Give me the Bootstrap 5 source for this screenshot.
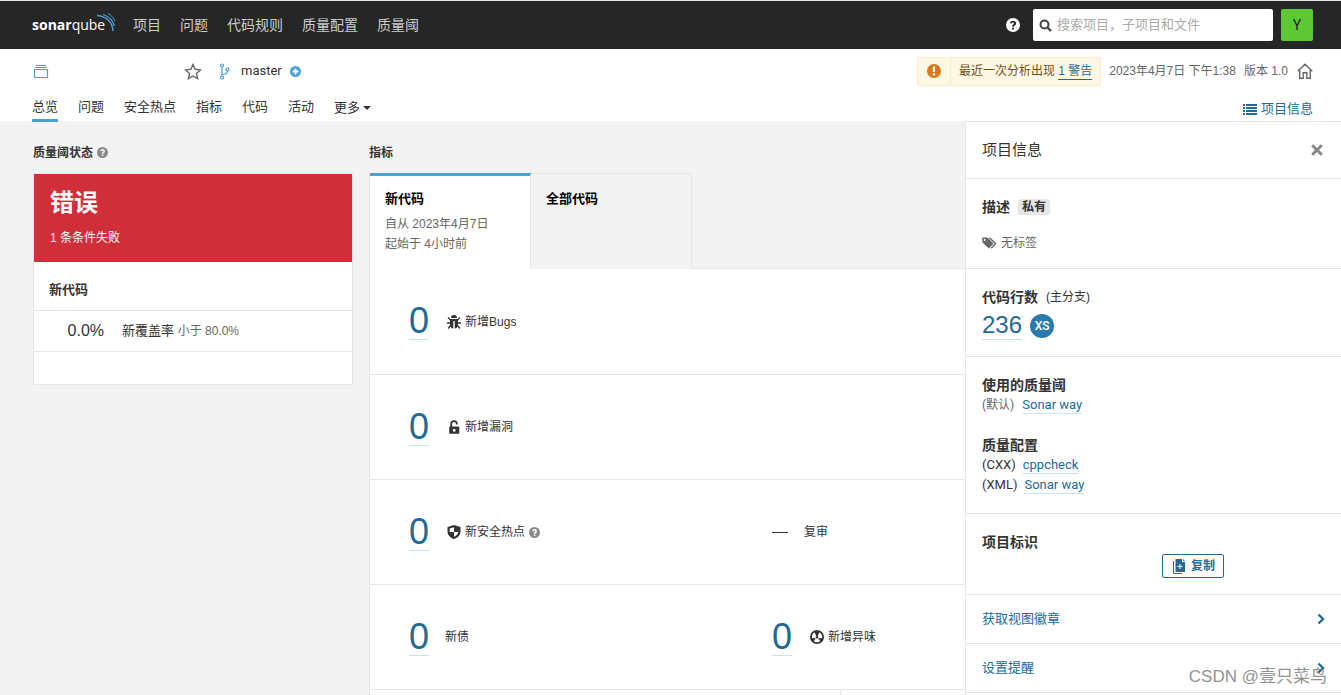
<!DOCTYPE html>
<html lang="zh-CN">
<head>
<meta charset="utf-8">
<meta name="viewport" content="width=device-width, initial-scale=1">
<title>SonarQube</title>
<link href="https://cdn.jsdelivr.net/npm/bootstrap@5.3.0/dist/css/bootstrap.min.css" rel="stylesheet">
<style>
body{font-family:Roboto,"Noto Sans CJK SC",sans-serif;font-size:12px;line-height:20px;color:#333;background:#f3f3f3;border-top:1px solid #dfe5e1}
a{color:#236a97;text-decoration:none}
svg{flex:none;fill:currentColor}
.arial{font-family:"Liberation Sans","Noto Sans CJK SC",sans-serif}
.fs13{font-size:13px}
.muted{color:#666}
.hint{color:#888}
.topbar{background:#262626;height:48px;padding:0 28px 0 32px}
.topbar nav{gap:19px;margin-left:17px}
.topbar nav a{color:#ccc;font-size:14px}
.search-box{width:240px;height:32px;background:#fff;border-radius:2px;padding:0 6px;color:#444;margin:0 8px 0 13px}
.search-box input{font-size:13px;padding:0 0 0 5px;line-height:20px}
.search-box input::placeholder{color:#aaa;opacity:1}
.avatar{width:32px;height:32px;background:#5cc934;color:#222;font-size:14px;border-radius:2px}
.context{background:#fff;height:72px;padding:8px 28px 0 32px}
.context .line1{height:28px}
.stroke{fill:none}
.alert-strip{background:#fcf8e3;border:1px solid #faebcc;border-radius:2px;color:#6f4f17;height:29px}
.alert-strip .sym{width:33px;border-right:1px solid #faebcc;color:#db781a}
.u{border-bottom:1px solid #cae3f2}
.alert-strip a{border-bottom:1px solid #236a97;line-height:16px}
.tabs{gap:20px}
.tabs a{color:#333;font-size:13px;height:25px;border-bottom:3px solid transparent;margin-top:12px}
.tabs a.on{border-color:#4b9fd5}
.tabs .dropdown-toggle::after{border-width:4px 4px 0}
.line{border:0 solid #e6e6e6}
.main-col{padding:21px 0 0 33px;gap:16px}
.gate{width:320px}
.sect{font-size:12px;font-weight:700;height:31px;line-height:22px;margin:0}
.gate-card{background:#fff;border-width:1px;height:212px}
.fail{background:#d02f3a;color:#fff;padding:12px 16px 13px;height:88px}
.fail h2{font-size:24px;line-height:34px;margin:0 0 8px;font-weight:700}
.gate-head{height:49px;padding:20px 15px 0;border-bottom-width:1px;margin:0}
.cond{height:41px;border-bottom-width:1px;gap:18px}
.cond b{width:70px;font-size:16px;font-weight:400}
.mtabs button{width:161px;height:96px;padding:15px 15px 0;border:0 solid #e6e6e6;background:none;text-align:left;color:#666;border-top-width:1px;border-right-width:1px}
.mtabs button strong{font-size:13px;color:#000;margin-bottom:5px}
.mtabs button.on{background:#fff;border-top:3px solid #4b9fd5;padding-top:13px}
.mtabs .fill{border-bottom-width:1px}
.measures{border-left-width:1px}
.m-row{background:#fff;height:105px;border-bottom-width:1px;padding-left:39px}
.mtabs + .m-row{height:106px}
.m-row .first{width:363px}
.big{font-size:36px;line-height:36px;height:37px}
.ico{margin-left:18px;margin-right:4px}
.info{width:376px;background:#fff;border-left-width:1px;border-top-width:1px}
.info section,.info header,.info .go{border-bottom-width:1px;padding:0 16px}
.info section{padding-top:18px}
.info .go{height:49px}
.info h3{font-size:14px;line-height:20px;font-weight:700;margin:0}
.tagbox{background:#e6e6e6;border-radius:3px;line-height:16px;padding:0 4px;font-weight:700}
.num{font-size:24px;line-height:28px}
.xs{width:24px;height:24px;background:#297bae;color:#fff;font-size:12px;font-weight:500}
.copy{height:24px;border:1px solid #236a97;border-radius:2px;color:#236a97;background:#fff;font-weight:700;padding:0 8px 0 10px;gap:6px;margin-left:180px;margin-top:2px}
.u13{line-height:16px}
.wm{right:14px;bottom:6px;font-size:17px;line-height:24px;color:#777;opacity:.8;pointer-events:none}
</style>
</head>
<body class="vh-100 overflow-hidden d-flex flex-column position-relative">
<svg width="0" height="0" class="position-absolute" aria-hidden="true">
<symbol id="help" viewBox="0 0 16 16"><path fill-rule="evenodd" d="M8 0a8 8 0 1 1 0 16A8 8 0 0 1 8 0zM7 11v2h2.300v-2zM4.600 5.600l1.600 1C6.700 5.700 7.200 5.200 8 5.200c.7 0 1.200.4 1.200.9 0 .6-.4.9-1 1.300C7.400 7.900 7 8.500 7 9.300v.7h2.200v-.4c0-.5.5-.8 1.100-1.200.8-.5 1.300-1.200 1.300-2.300C11.600 4.300 10 3 8.200 3 6.400 3 5.300 4 4.600 5.600z"/></symbol>
<symbol id="chev" viewBox="0 0 8 12"><path d="M1.500 1.500 6 6l-4.500 4.500" fill="none" stroke="currentColor" stroke-width="2.400"/></symbol>
</svg>

<header class="topbar d-flex align-items-center flex-shrink-0">
  <a href="#" aria-label="sonarqube"><svg width="84" height="30" viewBox="0 0 84 30">
    <text x="0" y="20" font-family="Open Sans" font-size="14" fill="#fff"><tspan font-weight="700">sonar</tspan><tspan>qube</tspan></text>
    <g fill="none" stroke="#4b9fd5"><path d="M65 5.500c9 .5 15.500 6.500 16 15.500" stroke-width="1.500"/><path d="M71 4.500c6 2 10 6 11.500 11.500" stroke-width="1.200"/><path d="M76 3.500c3.500 2 5.500 4.500 7 7.500"/></g>
  </svg></a>
  <nav class="d-flex"><a href="#">项目</a><a href="#">问题</a><a href="#">代码规则</a><a href="#">质量配置</a><a href="#">质量阈</a></nav>
  <div class="ms-auto d-flex align-items-center">
    <a href="#" class="text-white d-flex" aria-label="帮助"><svg width="14" height="14"><use href="#help"/></svg></a>
    <label class="search-box d-flex align-items-center">
      <svg width="13" height="13" viewBox="0 0 13 13"><circle cx="5.500" cy="5.500" r="4" fill="none" stroke="currentColor" stroke-width="2"/><path d="m8.500 8.500 3.500 3.500" stroke="currentColor" stroke-width="2.400"/></svg>
      <input type="text" class="form-control border-0 shadow-none bg-transparent" placeholder="搜索项目，子项目和文件" aria-label="搜索">
    </label>
    <button class="avatar border-0 p-0">Y</button>
  </div>
</header>

<div class="context flex-shrink-0">
  <div class="line1 d-flex align-items-center">
    <svg class="stroke" width="18" height="15" viewBox="0 0 18 15" stroke="#4b9fd5"><path d="M2.500 5.500h13v8h-13zM3 3.500h12M4 1.500h10" stroke-width="1.200"/></svg>
    <svg class="stroke" width="18" height="17" viewBox="0 0 18 17" style="margin-left:134px" stroke="#666" stroke-width="1.400"><path d="m9 1.500 2.200 4.800 5.200.6-3.900 3.500 1.100 5.200L9 13l-4.600 2.600 1.100-5.200L1.600 6.900l5.200-.6z"/></svg>
    <svg class="stroke" width="12" height="17" viewBox="0 0 12 17" style="margin-left:17px" stroke="#4b9fd5" stroke-width="1.200"><circle cx="3" cy="2.500" r="1.500"/><circle cx="3" cy="14.500" r="1.500"/><circle cx="8.500" cy="6.500" r="1.500"/><path d="M3 4v9M3 11.500c4 0 5.500-1 5.500-3.500"/></svg>
    <span class="fs13" style="margin-left:10px">master</span>
    <svg width="11" height="11" viewBox="0 0 11 11" class="ms-2"><circle cx="5.500" cy="5.500" r="5.500" fill="#4b9fd5"/><path d="M5.500 2.500v6M2.500 5.500h6" stroke="#fff" stroke-width="1.800"/></svg>
    <div class="ms-auto d-flex align-items-center arial">
      <div class="alert-strip d-flex">
        <span class="sym d-flex align-items-center justify-content-center"><svg width="14" height="14" viewBox="0 0 14 14"><circle cx="7" cy="7" r="7"/><path d="M7 2.500v5.500M7 9.300v2.200" stroke="#fff" stroke-width="2.200"/></svg></span>
        <span class="d-flex align-items-center px-2"><span>最近一次分析出现&nbsp;</span><a href="#">1 警告</a></span>
      </div>
      <span class="muted ms-2">2023年4月7日 下午1:38</span><span class="muted ms-2">版本 1.0</span>
      <a href="#" class="d-flex muted" aria-label="主页" style="margin-left:9px"><svg class="stroke" width="16" height="16" viewBox="0 0 16 16" stroke="currentColor" stroke-width="1.400"><path d="M.7 8.300 8 1.200l7.300 7.100M2.700 7v8.200h3.500v-5.400h3.600v5.400h3.500V7"/></svg></a>
    </div>
  </div>
  <div class="d-flex align-items-start">
    <nav class="tabs d-flex"><a class="on" href="#">总览</a><a href="#">问题</a><a href="#">安全热点</a><a href="#">指标</a><a href="#">代码</a><a href="#">活动</a><a href="#" class="dropdown-toggle d-flex align-items-center">更多</a></nav>
    <a href="#" class="ms-auto d-flex align-items-center fs13" style="margin-top:14px"><svg class="me-1" width="14" height="11" viewBox="0 0 14 11"><path d="M0 0h2v2H0zM3 0h11v2H3zM0 3h2v2H0zM3 3h11v2H3zM0 6h2v2H0zM3 6h11v2H3zM0 9h2v2H0zM3 9h11v2H3z"/></svg>项目信息</a>
  </div>
</div>

<div class="d-flex flex-grow-1 overflow-hidden">
  <main class="main-col d-flex flex-grow-1">
    <div class="gate flex-shrink-0">
      <h2 class="sect d-flex align-items-start">质量阈状态<svg class="hint ms-1" width="11" height="22" viewBox="0 0 11 22"><use href="#help" y="5" width="11" height="11"/></svg></h2>
      <div class="gate-card line arial">
        <div class="fail"><h2>错误</h2><div>1 条条件失败</div></div>
        <h3 class="gate-head line fs13 fw-bold">新代码</h3>
        <div class="cond line d-flex align-items-center"><b class="text-end">0.0%</b><div class="fs13">新覆盖率 <span class="muted" style="font-size:12px">小于 80.0%</span></div></div>
      </div>
    </div>
    <div class="flex-grow-1 arial">
      <h2 class="sect">指标</h2>
      <div class="measures line">
        <div class="mtabs d-flex">
          <button class="on d-flex flex-column"><strong>新代码</strong><span>自从 2023年4月7日</span><span>起始于 4小时前</span></button>
          <button class="d-flex flex-column"><strong>全部代码</strong></button>
          <div class="fill line flex-grow-1"></div>
        </div>
        <div class="m-row line d-flex align-items-center"><a href="#" class="big u">0</a>
          <svg class="ico" width="14" height="14" viewBox="0 0 14 14"><path d="M4 3a3 3 0 0 1 6 0zM3 4h8v6.500C11 12 9.500 13.500 7.700 13.500V6H6.300v7.500C4.500 13.500 3 12 3 10.500z"/><path d="m1 2.500 2.500 2.500M13 2.500 10.500 5M0 8h3M14 8h-3M1 13.500l2.500-3M13 13.500l-2.500-3" stroke="currentColor" stroke-width="1.300"/></svg>新增Bugs</div>
        <div class="m-row line d-flex align-items-center"><a href="#" class="big u">0</a>
          <svg class="ico" width="14" height="14" viewBox="0 0 14 14"><path fill-rule="evenodd" d="M3 6.500h8.500q.8 0 .8.800V13q0 .8-.8.800H3q-.8 0-.8-.800V7.300q0-.8.8-.8zM7.200 8.700a1.500 1.500 0 1 0 0 3 1.500 1.500 0 0 0 0-3z"/><path d="M4.200 7V3.700a2.800 2.600 0 0 1 5.600 0v.8" fill="none" stroke="currentColor" stroke-width="1.800"/></svg>新增漏洞</div>
        <div class="m-row line d-flex align-items-center"><div class="first d-flex align-items-center"><a href="#" class="big u">0</a>
          <svg class="ico" width="14" height="14" viewBox="0 0 14 14"><path fill-rule="evenodd" d="M7 0 13.500 2v4.500C13.500 10 11 12.500 7 14 3 12.500.5 10 .5 6.500V2zM7 2.200 2.700 3.500V7H7zM7 7v4.800c2.400-1 4-2.600 4.300-4.800z"/></svg>新安全热点<svg class="hint ms-1" width="11" height="11"><use href="#help"/></svg></div>
          <svg width="16" height="1" viewBox="0 0 16 1" class="me-3"><path d="M0 0h16v1H0z"/></svg>复审</div>
        <div class="m-row line d-flex align-items-center"><div class="first d-flex align-items-center"><a href="#" class="big u">0</a><span class="ms-3">新债</span></div>
          <a href="#" class="big u">0</a>
          <svg class="ico" width="14" height="14" viewBox="0 0 14 14"><circle cx="7" cy="7" r="6.100" fill="none" stroke="currentColor" stroke-width="1.800"/><circle cx="7" cy="7.200" r="1.300"/><path d="M1 7.500h4.500L3.300 12zM13 7.500H8.500l2.200 4.500zM7 8.700 9.800 13H4.200z" opacity="0"/><path d="M6.300 1v4.800L3.500 9 1 8.500V6.500zM7.700 1v4.800L10.500 9 13 8.500V6.500zM5.500 9.500h3l1.300 1.500H4.200z" opacity="0"/><path d="M4.300 1.500 6.200 6H7.800L9.700 1.500zM1 8l4.800.2L3.300 12zM13 8l-4.800.2 2.500 3.800z"/></svg>新增异味</div>
        <div class="m-row line d-flex ps-0"><div class="line h-100" style="width:471px;border-right-width:1px"></div></div>
      </div>
    </div>
  </main>

  <aside class="info line flex-shrink-0">
    <header class="line d-flex align-items-center justify-content-between" style="height:57px"><span style="font-size:15px">项目信息</span>
      <button class="border-0 bg-transparent p-0 d-flex hint" aria-label="关闭" style="margin-right:2px"><svg width="12" height="12" viewBox="0 0 12 12"><path d="m1.200 1.200 9.600 9.600M10.800 1.200l-9.600 9.600" stroke="currentColor" stroke-width="3"/></svg></button></header>
    <section class="line" style="height:90px"><div class="d-flex align-items-center gap-2"><h3>描述</h3><span class="tagbox">私有</span></div>
      <div class="muted d-flex align-items-center mt-3"><svg class="me-1" width="15" height="12" viewBox="0 0 15 12"><path fill-rule="evenodd" d="M0 1.500 1 .5h4.500l6 6-4.700 5L.5 5.500zM2.700 2a1 1 0 1 0 0 2 1 1 0 0 0 0-2z"/><path d="m7.500.8 6 5.700-4.300 4.700" fill="none" stroke="currentColor" stroke-width="1.300"/></svg>无标签</div></section>
    <section class="line" style="height:88px"><div class="d-flex align-items-center gap-2"><h3>代码行数</h3><span class="arial">(主分支)</span></div>
      <div class="d-flex align-items-center gap-2 mt-1"><a href="#" class="num u arial">236</a><span class="xs rounded-circle d-flex align-items-center justify-content-center">XS</span></div></section>
    <section class="line fs13" style="height:157px"><h3>使用的质量阈</h3><div class="d-flex gap-2 align-items-center"><span class="muted" style="font-size:12px">(默认)</span><a class="u u13" href="#">Sonar way</a></div>
      <h3 style="margin-top:20px">质量配置</h3><div class="d-flex align-items-center" style="gap:7px"><span>(CXX)</span><a class="u u13" href="#">cppcheck</a></div><div class="d-flex align-items-center" style="gap:7px"><span>(XML)</span><a class="u u13" href="#">Sonar way</a></div></section>
    <section class="line" style="height:81px"><h3>项目标识</h3>
      <button class="copy d-flex align-items-center"><svg width="12" height="15" viewBox="0 0 12 15"><path fill-rule="evenodd" d="M2.500 0H9v3h3v10H2.500zM10 0l2 2h-2zM6.500 5v2h-2v1h2v2h1V8h2V7h-2V5z"/><path d="M.5 2v12.500H9" fill="none" stroke="currentColor"/></svg>复制</button></section>
    <a href="#" class="go line d-flex align-items-center justify-content-between fs13">获取视图徽章<svg width="8" height="12"><use href="#chev"/></svg></a>
    <a href="#" class="go line d-flex align-items-center justify-content-between fs13">设置提醒<svg width="8" height="12"><use href="#chev"/></svg></a>
  </aside>
</div>
<div class="wm position-absolute arial">CSDN @壹只菜鸟</div>
<script src="https://cdn.jsdelivr.net/npm/bootstrap@5.3.0/dist/js/bootstrap.bundle.min.js"></script>
</body>
</html>
